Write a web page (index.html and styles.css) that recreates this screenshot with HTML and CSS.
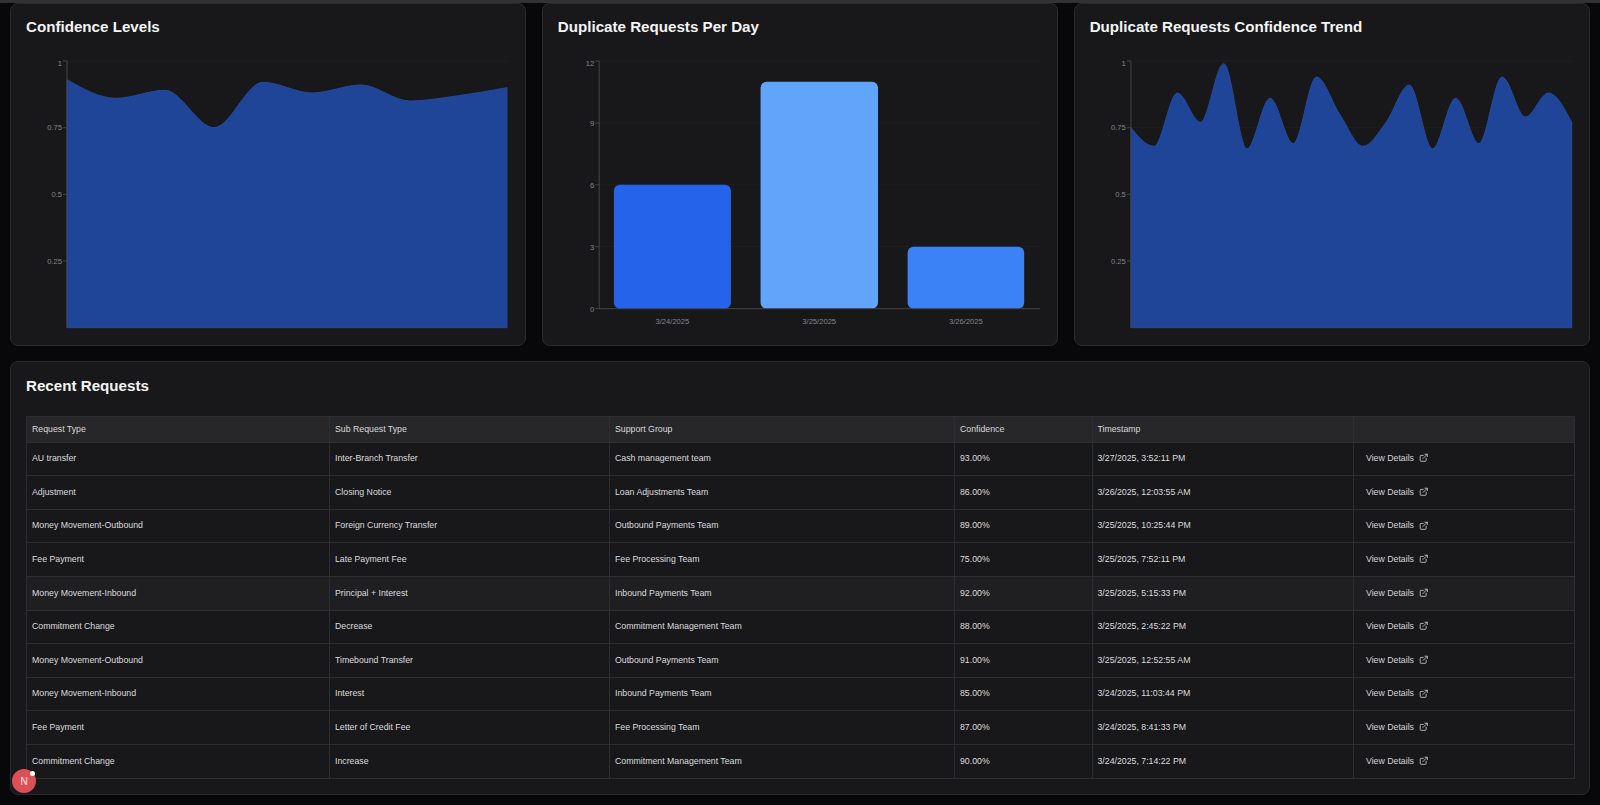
FILE: index.html
```html
<!DOCTYPE html>
<html lang="en">
<head>
    <meta charset="UTF-8">
    <meta name="viewport" content="width=device-width, initial-scale=1.0">
    <link rel="stylesheet" href="styles.css">
    <title>Duplicate Requests Dashboard</title>
</head>
<body>
    <div class="topbar"></div>
    <main class="page">
        <section class="charts">
            <div class="card">
                <h3 class="card-title chart-title">Confidence Levels</h3>
                <svg class="chart" viewBox="26 50 484 280" width="484" height="280">
                    <g class="grid">
                        <line x1="67" x2="507" y1="61" y2="61"/>
                        <line x1="67" x2="507" y1="127.7" y2="127.7"/>
                        <line x1="67" x2="507" y1="194.3" y2="194.3"/>
                        <line x1="67" x2="507" y1="261" y2="261"/>
                    </g>
                    <path class="area" d="M67 79.67C83.32 89 99.68 98.33 116 98.33C132.3 98.33 148.7 90.33 165 90.33C181.3 90.33 197.7 127.67 214 127.67C230.3 127.67 246.7 82.33 263 82.33C279.3 82.33 295.7 93 312 93C328.3 93 344.7 85 361 85C377.3 85 393.7 101 410 101C426.3 101 442.4 97.89 458.7 95.67C475 93.45 491 90.56 507 87.67V327.7H67Z"/>
                    <path class="axis" d="M67 327.7V61M63 61H67M63 127.7H67M63 194.3H67M63 261H67"/>
                    <g class="tick-y">
                        <text x="62" y="65.7">1</text>
                        <text x="62" y="130">0.75</text>
                        <text x="62" y="197">0.5</text>
                        <text x="62" y="263.7">0.25</text>
                    </g>
                </svg>
            </div>

            <div class="card">
                <h3 class="card-title chart-title">Duplicate Requests Per Day</h3>
                <svg class="chart" viewBox="557.8 50 484 280" width="484" height="280">
                    <g class="grid">
                        <line x1="599" x2="1039.6" y1="61" y2="61"/>
                        <line x1="599" x2="1039.6" y1="123" y2="123"/>
                        <line x1="599" x2="1039.6" y1="184.8" y2="184.8"/>
                        <line x1="599" x2="1039.6" y1="246.7" y2="246.7"/>
                    </g>
                    <rect class="bar-a" x="613.7" y="184.7" width="117" height="124" rx="6"/>
                    <rect class="bar-b" x="760.4" y="81.7" width="117.4" height="227" rx="6"/>
                    <rect class="bar-c" x="907.4" y="246.7" width="116.6" height="62" rx="6"/>
                    <path class="axis" d="M599 308.7V61M595 61H599M595 123H599M595 184.8H599M595 246.7H599M595 308.7H1039.6"/>
                    <g class="tick-y">
                        <text x="594" y="65.7">12</text>
                        <text x="594" y="126">9</text>
                        <text x="594" y="188">6</text>
                        <text x="594" y="249.7">3</text>
                        <text x="594" y="311.5">0</text>
                    </g>
                    <g class="tick-x">
                        <text x="672.2" y="323.7">3/24/2025</text>
                        <text x="819" y="323.7">3/25/2025</text>
                        <text x="965.7" y="323.7">3/26/2025</text>
                    </g>
                </svg>
            </div>

            <div class="card">
                <h3 class="card-title chart-title">Duplicate Requests Confidence Trend</h3>
                <svg class="chart" viewBox="1089.7 50 484 280" width="484" height="280">
                    <g class="grid">
                        <line x1="1130.6" x2="1571.4" y1="61" y2="61"/>
                        <line x1="1130.6" x2="1571.4" y1="127.7" y2="127.7"/>
                        <line x1="1130.6" x2="1571.4" y1="194.3" y2="194.3"/>
                        <line x1="1130.6" x2="1571.4" y1="261" y2="261"/>
                    </g>
                    <path class="area" d="M1130.6 127.67c7.74 9.33 15.47 18.66 23.2 18.66c7.74 0 15.47 -53.33 23.2 -53.33c7.74 0 15.47 29.33 23.2 29.33c7.74 0 15.47 -58.66 23.2 -58.66c7.74 0 15.47 85.33 23.2 85.33c7.74 0 15.47 -50.67 23.2 -50.67c7.74 0 15.47 45.34 23.2 45.34c7.74 0 15.47 -66.67 23.2 -66.67c7.74 0 15.47 25.77 23.2 37.33c7.74 11.56 15.47 32 23.2 32c7.74 0 15.47 -13.78 23.2 -24c7.74 -10.22 15.47 -37.33 23.2 -37.33c7.74 0 15.47 64 23.2 64c7.74 0 15.47 -50.67 23.2 -50.67c7.74 0 15.47 45.34 23.2 45.34c7.74 0 15.47 -66.67 23.2 -66.67c7.74 0 15.47 40 23.2 40c7.74 0 15.47 -24 23.2 -24c7.74 0 15.47 14.66 23.2 29.33V327.7H1130.6Z"/>
                    <path class="axis" d="M1130.6 327.7V61M1126.6 61H1130.6M1126.6 127.7H1130.6M1126.6 194.3H1130.6M1126.6 261H1130.6"/>
                    <g class="tick-y">
                        <text x="1125.5" y="65.7">1</text>
                        <text x="1125.5" y="130">0.75</text>
                        <text x="1125.5" y="197">0.5</text>
                        <text x="1125.5" y="263.7">0.25</text>
                    </g>
                </svg>
            </div>
        </section>

        <section class="card">
            <h3 class="card-title table-title">Recent Requests</h3>
            <table class="requests">
                <colgroup>
                    <col class="col-type">
                    <col class="col-sub">
                    <col class="col-group">
                    <col class="col-conf">
                    <col class="col-time">
                    <col class="col-link">
                </colgroup>
                <thead>
                    <tr>
                        <th>Request Type</th>
                        <th>Sub Request Type</th>
                        <th>Support Group</th>
                        <th>Confidence</th>
                        <th>Timestamp</th>
                        <th></th>
                    </tr>
                </thead>
                <tbody>
                    <tr>
                        <td>AU transfer</td><td>Inter-Branch Transfer</td><td>Cash management team</td><td>93.00%</td><td>3/27/2025, 3:52:11 PM</td>
                        <td class="link-cell"><a class="details" href="#">View Details <svg class="ext" viewBox="0 0 24 24"><path d="M15 3h6v6M10 14 21 3M18 13v6a2 2 0 0 1-2 2H5a2 2 0 0 1-2-2V8a2 2 0 0 1 2-2h6"/></svg></a></td>
                    </tr>
                    <tr>
                        <td>Adjustment</td><td>Closing Notice</td><td>Loan Adjustments Team</td><td>86.00%</td><td>3/26/2025, 12:03:55 AM</td>
                        <td class="link-cell"><a class="details" href="#">View Details <svg class="ext" viewBox="0 0 24 24"><path d="M15 3h6v6M10 14 21 3M18 13v6a2 2 0 0 1-2 2H5a2 2 0 0 1-2-2V8a2 2 0 0 1 2-2h6"/></svg></a></td>
                    </tr>
                    <tr>
                        <td>Money Movement-Outbound</td><td>Foreign Currency Transfer</td><td>Outbound Payments Team</td><td>89.00%</td><td>3/25/2025, 10:25:44 PM</td>
                        <td class="link-cell"><a class="details" href="#">View Details <svg class="ext" viewBox="0 0 24 24"><path d="M15 3h6v6M10 14 21 3M18 13v6a2 2 0 0 1-2 2H5a2 2 0 0 1-2-2V8a2 2 0 0 1 2-2h6"/></svg></a></td>
                    </tr>
                    <tr>
                        <td>Fee Payment</td><td>Late Payment Fee</td><td>Fee Processing Team</td><td>75.00%</td><td>3/25/2025, 7:52:11 PM</td>
                        <td class="link-cell"><a class="details" href="#">View Details <svg class="ext" viewBox="0 0 24 24"><path d="M15 3h6v6M10 14 21 3M18 13v6a2 2 0 0 1-2 2H5a2 2 0 0 1-2-2V8a2 2 0 0 1 2-2h6"/></svg></a></td>
                    </tr>
                    <tr class="hovered">
                        <td>Money Movement-Inbound</td><td>Principal + Interest</td><td>Inbound Payments Team</td><td>92.00%</td><td>3/25/2025, 5:15:33 PM</td>
                        <td class="link-cell"><a class="details" href="#">View Details <svg class="ext" viewBox="0 0 24 24"><path d="M15 3h6v6M10 14 21 3M18 13v6a2 2 0 0 1-2 2H5a2 2 0 0 1-2-2V8a2 2 0 0 1 2-2h6"/></svg></a></td>
                    </tr>
                    <tr>
                        <td>Commitment Change</td><td>Decrease</td><td>Commitment Management Team</td><td>88.00%</td><td>3/25/2025, 2:45:22 PM</td>
                        <td class="link-cell"><a class="details" href="#">View Details <svg class="ext" viewBox="0 0 24 24"><path d="M15 3h6v6M10 14 21 3M18 13v6a2 2 0 0 1-2 2H5a2 2 0 0 1-2-2V8a2 2 0 0 1 2-2h6"/></svg></a></td>
                    </tr>
                    <tr>
                        <td>Money Movement-Outbound</td><td>Timebound Transfer</td><td>Outbound Payments Team</td><td>91.00%</td><td>3/25/2025, 12:52:55 AM</td>
                        <td class="link-cell"><a class="details" href="#">View Details <svg class="ext" viewBox="0 0 24 24"><path d="M15 3h6v6M10 14 21 3M18 13v6a2 2 0 0 1-2 2H5a2 2 0 0 1-2-2V8a2 2 0 0 1 2-2h6"/></svg></a></td>
                    </tr>
                    <tr>
                        <td>Money Movement-Inbound</td><td>Interest</td><td>Inbound Payments Team</td><td>85.00%</td><td>3/24/2025, 11:03:44 PM</td>
                        <td class="link-cell"><a class="details" href="#">View Details <svg class="ext" viewBox="0 0 24 24"><path d="M15 3h6v6M10 14 21 3M18 13v6a2 2 0 0 1-2 2H5a2 2 0 0 1-2-2V8a2 2 0 0 1 2-2h6"/></svg></a></td>
                    </tr>
                    <tr>
                        <td>Fee Payment</td><td>Letter of Credit Fee</td><td>Fee Processing Team</td><td>87.00%</td><td>3/24/2025, 8:41:33 PM</td>
                        <td class="link-cell"><a class="details" href="#">View Details <svg class="ext" viewBox="0 0 24 24"><path d="M15 3h6v6M10 14 21 3M18 13v6a2 2 0 0 1-2 2H5a2 2 0 0 1-2-2V8a2 2 0 0 1 2-2h6"/></svg></a></td>
                    </tr>
                    <tr>
                        <td>Commitment Change</td><td>Increase</td><td>Commitment Management Team</td><td>90.00%</td><td>3/24/2025, 7:14:22 PM</td>
                        <td class="link-cell"><a class="details" href="#">View Details <svg class="ext" viewBox="0 0 24 24"><path d="M15 3h6v6M10 14 21 3M18 13v6a2 2 0 0 1-2 2H5a2 2 0 0 1-2-2V8a2 2 0 0 1 2-2h6"/></svg></a></td>
                    </tr>
                </tbody>
            </table>
        </section>
    </main>
    <div class="dev-badge"><span class="dev-n">N</span><span class="dev-dot"></span></div>
</body>
</html>
```

FILE: styles.css
```css
* { box-sizing: border-box; }
html, body { height: 100%; }
body {
    margin: 0;
    background: #08080a;
    color: #e4e4e7;
    font-family: "Liberation Sans", Arial, sans-serif;
    overflow: hidden;
}
.topbar { height: 3px; background: #323235; }
.page { padding: 0 10px; display: flex; flex-direction: column; gap: 15px; }
.charts { display: grid; grid-template-columns: repeat(3, 1fr); gap: 15.5px; }
.card { background: #18181a; border: 1px solid #2b2b2e; border-radius: 8px; padding: 14px 15px 15px; }
.card-title { margin: 0; font-size: 15.15px; line-height: 18px; font-weight: 700; color: #f4f4f5; }
.chart-title { margin-bottom: 14px; }
.table-title { margin-top: 1px; margin-bottom: 21px; }
.chart { display: block; }

/* charts */
.grid line { stroke: #1f1f22; stroke-width: 1; }
.area { fill: #1f4598; stroke: #27499b; stroke-width: 1; }
.axis { fill: none; stroke: #444448; stroke-width: 1; }
.tick-y text, .tick-x text { font-size: 7.6px; fill: #85858a; }
.tick-y text { text-anchor: end; }
.tick-x text { text-anchor: middle; }
.bar-a { fill: #2563eb; }
.bar-b { fill: #60a5fa; }
.bar-c { fill: #3b82f6; }

/* table */
.requests { width: calc(100% + 1px); table-layout: fixed; border-collapse: collapse; font-size: 8.75px; }
.col-type { width: 303px; }
.col-sub { width: 280px; }
.col-group { width: 345px; }
.col-conf { width: 137.5px; }
.col-time { width: 261px; }
.requests th, .requests td { border: 1px solid #2e2e32; padding: 0 5px 1px; text-align: left; font-weight: 400; white-space: nowrap; }
.requests th { height: 25.7px; background: #272729; color: #d8d8dc; }
.requests td { height: 33.6px; color: #dcdcdf; padding-bottom: 1.5px; }
.hovered td { background: #1f1f21; }
.requests .link-cell { padding-left: 12.5px; }
.details { display: inline-flex; align-items: center; gap: 5px; color: #d4d4d8; text-decoration: none; }
.ext { width: 9.5px; height: 9.5px; fill: none; stroke: currentColor; stroke-width: 2; stroke-linecap: round; stroke-linejoin: round; }

/* dev badge over the corner of the table */
.dev-badge {
    position: absolute;
    left: 12px;
    top: 769px;
    width: 24px;
    height: 24px;
    border-radius: 50%;
    background: #dd4f58;
    display: flex;
    align-items: center;
    justify-content: center;
}
.dev-n { font-size: 10px; color: #f8e9ea; font-weight: 400; }
.dev-dot { position: absolute; right: 1px; top: 2px; width: 5px; height: 5px; border-radius: 50%; background: #fff; }
```
